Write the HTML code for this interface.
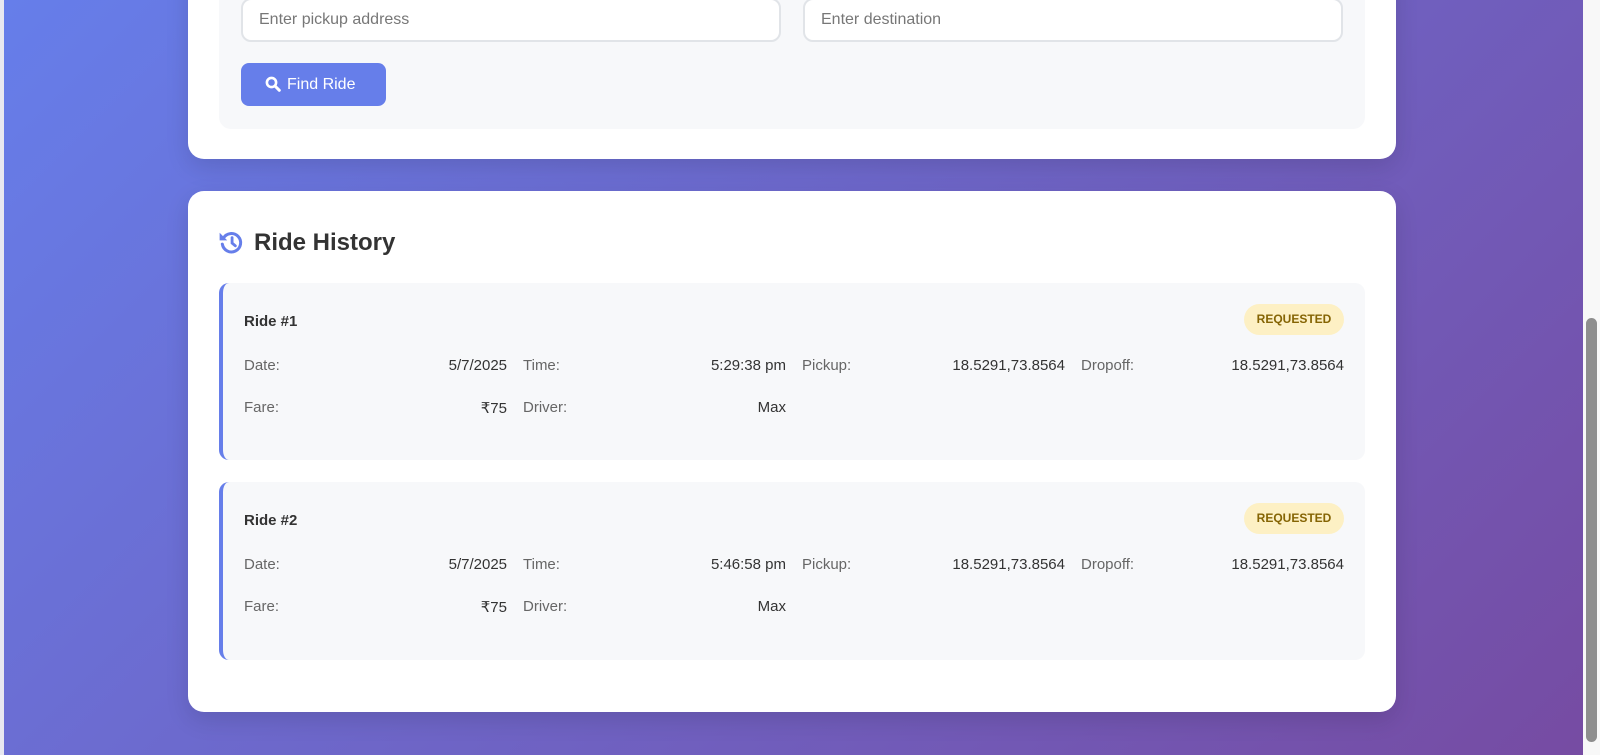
<!DOCTYPE html>
<html><head><meta charset="utf-8"><style>
*{box-sizing:border-box;margin:0;padding:0}
html,body{width:1600px;height:755px;overflow:hidden}
body{font-family:"Liberation Sans",sans-serif;background:linear-gradient(135deg,#667eea 0%,#764ba2 100%);position:relative;color:#333}
.card{position:absolute;left:188px;width:1208px;background:#fff;border-radius:16px;box-shadow:0 8px 24px rgba(0,0,0,.12)}
.sec{position:absolute;left:31px;right:31px;background:#f7f8fa;border-radius:12px}
.inp{position:absolute;height:44px;background:#fff;border:2px solid #e1e4e8;border-radius:10px;font-size:16px;color:#777;padding:0 16px;line-height:40px}
.btn{position:absolute;left:241px;top:63px;width:145px;height:43px;background:#667eea;border-radius:8px;color:#fff;font-size:16px;line-height:43px;padding-left:24px}
.btn svg{vertical-align:-3px;margin-right:6px}
.item{position:absolute;left:31px;right:31px;background:#f7f8fa;border-radius:10px;border-left:4px solid #667eea}
.rt{position:absolute;left:21px;font-weight:bold;font-size:15px;color:#333}
.badge{position:absolute;right:21px;width:100px;height:31px;border-radius:16px;background:#fdf0c4;color:#856404;font-size:12px;font-weight:bold;text-align:center;line-height:31px}
.row{position:absolute;left:21px;width:1101px;height:20px;font-size:15px}
.c{position:absolute;width:263px;top:0}
.c .l{position:absolute;left:0;color:#666}
.c .v{position:absolute;right:0;color:#333}
.sb{position:absolute;right:0;top:0;width:17px;height:755px;background:#f8f8f8}
.th{position:absolute;right:3px;top:318px;width:11px;height:424px;background:#8e8e8e;border-radius:6px}
.le{position:absolute;left:0;top:0;width:4px;height:755px;background:#e8e8f0}
</style></head><body>
<div class="le"></div>
<div class="card" style="top:-40px;height:199px">
 <div class="sec" style="top:0;height:169px"></div>
</div>
<div class="inp" style="left:241px;top:-2px;width:540px">Enter pickup address</div>
<div class="inp" style="left:803px;top:-2px;width:540px">Enter destination</div>
<div class="btn"><svg width="16" height="16" viewBox="0 0 16 16"><circle cx="6.5" cy="6.5" r="4.6" fill="none" stroke="#fff" stroke-width="2.6"/><path d="M10 10l4.3 4.3" stroke="#fff" stroke-width="3" stroke-linecap="round"/></svg>Find Ride</div>

<div class="card" style="top:191px;height:521px">
 <svg style="position:absolute;left:30px;top:38px" width="26" height="26" viewBox="0 0 24 24"><path d="M5 8.5A8.5 8.5 0 1 1 4 14" fill="none" stroke="#667eea" stroke-width="2.8" stroke-linecap="round"/><path d="M1.5 3.5v7h7z" fill="#667eea"/><path d="M13 8v5l3 2.5" fill="none" stroke="#667eea" stroke-width="2.6" stroke-linecap="round"/></svg>
 <div style="position:absolute;left:66px;top:38px;font-size:24px;font-weight:bold;color:#333">Ride History</div>
 <div class="item" style="top:92px;height:177px">
  <div class="rt" style="top:30px">Ride #1</div>
  <div class="badge" style="top:21px">REQUESTED</div>
  <div class="row" style="top:74px">
   <div class="c" style="left:0"><span class="l">Date:</span><span class="v">5/7/2025</span></div>
   <div class="c" style="left:279px"><span class="l">Time:</span><span class="v">5:29:38 pm</span></div>
   <div class="c" style="left:558px"><span class="l">Pickup:</span><span class="v">18.5291,73.8564</span></div>
   <div class="c" style="left:837px"><span class="l">Dropoff:</span><span class="v">18.5291,73.8564</span></div>
  </div>
  <div class="row" style="top:116px">
   <div class="c" style="left:0"><span class="l">Fare:</span><span class="v">₹75</span></div>
   <div class="c" style="left:279px"><span class="l">Driver:</span><span class="v">Max</span></div>
  </div>
 </div>
 <div class="item" style="top:291px;height:178px">
  <div class="rt" style="top:30px">Ride #2</div>
  <div class="badge" style="top:21px">REQUESTED</div>
  <div class="row" style="top:74px">
   <div class="c" style="left:0"><span class="l">Date:</span><span class="v">5/7/2025</span></div>
   <div class="c" style="left:279px"><span class="l">Time:</span><span class="v">5:46:58 pm</span></div>
   <div class="c" style="left:558px"><span class="l">Pickup:</span><span class="v">18.5291,73.8564</span></div>
   <div class="c" style="left:837px"><span class="l">Dropoff:</span><span class="v">18.5291,73.8564</span></div>
  </div>
  <div class="row" style="top:116px">
   <div class="c" style="left:0"><span class="l">Fare:</span><span class="v">₹75</span></div>
   <div class="c" style="left:279px"><span class="l">Driver:</span><span class="v">Max</span></div>
  </div>
 </div>
</div>
<div class="sb"><div class="th"></div></div>
</body></html>
